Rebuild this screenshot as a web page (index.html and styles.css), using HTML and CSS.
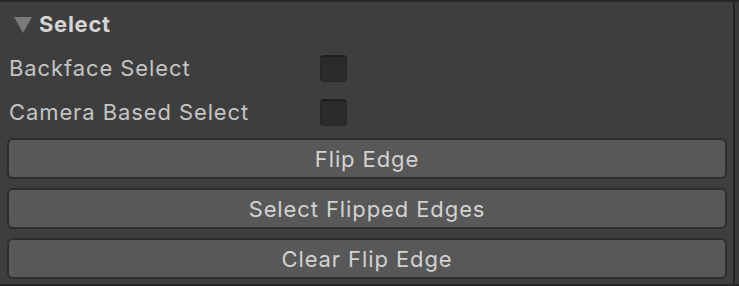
FILE: index.html
```html
<!DOCTYPE html>
<html>
<head>
<meta charset="utf-8">
<link rel="stylesheet" href="styles.css">
</head>
<body>
<div class="frame">
  <div class="panel">
    <div class="header">
      <span class="arrow"></span>
      <span class="title">Select</span>
    </div>
    <div class="row">
      <span class="label">Backface Select</span>
      <span class="check"></span>
    </div>
    <div class="row">
      <span class="label">Camera Based Select</span>
      <span class="check"></span>
    </div>
    <div class="buttons">
      <div class="btn">Flip Edge</div>
      <div class="btn">Select Flipped Edges</div>
      <div class="btn">Clear Flip Edge</div>
    </div>
  </div>
  <div class="divider"></div>
  <div class="strip"></div>
</div>
</body>
</html>
```
FILE: styles.css
```css
html, body {
  margin: 0;
  padding: 0;
  background: #3a3a3a;
}
body {
  width: 739px;
  height: 286px;
  overflow: hidden;
  font-family: Inter, "Noto Sans", sans-serif;
}
.frame {
  display: flex;
  height: 286px;
  box-sizing: border-box;
  border-top: 2px solid #262626;
  border-bottom: 2px solid #262626;
}
.panel {
  width: 733px;
  background: #3e3e3e;
  display: flex;
  flex-direction: column;
  box-sizing: border-box;
  padding: 0 6px 0 0;
}
.divider {
  width: 2px;
  background: #232323;
}
.strip {
  flex: 1;
  background: #393939;
}
.header {
  height: 44px;
  display: flex;
  align-items: center;
  padding-left: 14px;
}
.arrow {
  width: 0;
  height: 0;
  border-left: 9px solid transparent;
  border-right: 9px solid transparent;
  border-top: 16px solid #7a7a7a;
  margin-right: 7px;
  margin-top: 2px;
}
.title {
  font-weight: 700;
  font-size: 22px;
  letter-spacing: 0.7px;
  color: #d4d4d4;
}
.row {
  height: 44px;
  display: flex;
  align-items: center;
  padding-left: 9px;
}
.label {
  width: 311px;
  font-size: 22px;
  letter-spacing: 0.9px;
  color: #c4c4c4;
}
.check {
  width: 27px;
  height: 27px;
  box-sizing: border-box;
  background: #2b2b2b;
  border: 1px solid #262626;
  border-top: 2px solid #1e1e1e;
  border-radius: 4px;
}
.buttons {
  display: flex;
  flex-direction: column;
  gap: 9px;
  padding: 4px 0 0 7px;
}
.btn {
  height: 41px;
  box-sizing: border-box;
  background: #585858;
  border: 2px solid #2e2e2e;
  border-radius: 6px;
  display: flex;
  align-items: center;
  justify-content: center;
  font-size: 22px;
  letter-spacing: 0.9px;
  color: #d2d2d2;
}
```
